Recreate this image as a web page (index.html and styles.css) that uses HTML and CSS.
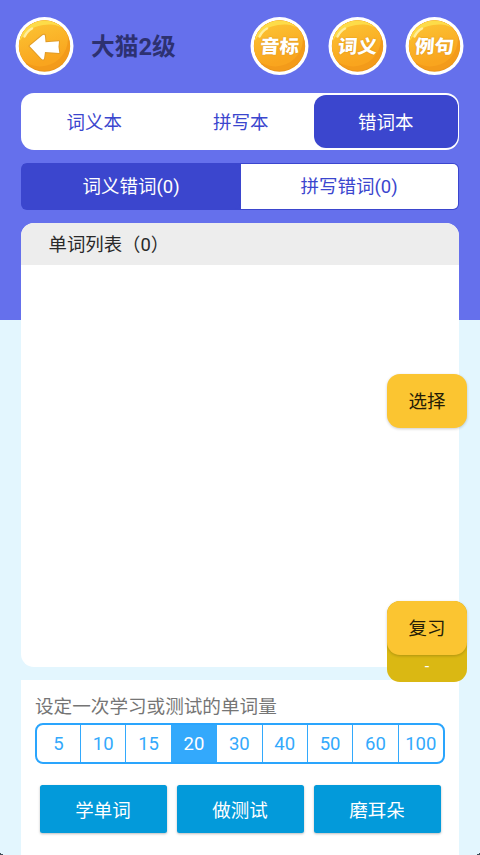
FILE: index.html
```html
<!DOCTYPE html>
<html lang="zh-CN">
<head>
<meta charset="utf-8">
<title>大猫2级</title>
<link rel="stylesheet" href="styles.css">
</head>
<body>
<svg class="defs" width="0" height="0" aria-hidden="true">
  <defs>
    <linearGradient id="gold" x1="0" y1="0" x2=".3" y2="1">
      <stop offset="0" stop-color="#fdcf3c"/>
      <stop offset="1" stop-color="#f9a51e"/>
    </linearGradient>
    <clipPath id="disc"><circle cx="29.5" cy="30" r="25.5"/></clipPath>
    <symbol id="coin" viewBox="0 0 59 60">
      <circle cx="29.5" cy="30" r="29" fill="#fff"/>
      <circle cx="29.5" cy="30" r="25.7" fill="#e8941c"/>
      <g clip-path="url(#disc)">
        <circle cx="29.5" cy="29" r="25.7" fill="#f39b1a"/>
        <circle cx="25" cy="22.500" r="28" fill="url(#gold)"/>
        <path d="M4 26C7 11 17 4 29 4s17 3 22 10C43 8 35 8 28 9 15 11 10 17 4 26Z" fill="#fddc49"/>
        <path d="M9.500 20.500c2-4 4.500-6.500 7.500-8" fill="none" stroke="#ffee9c" stroke-width="2.500" stroke-linecap="round"/>
      </g>
    </symbol>
  </defs>
</svg>
<main class="page">
  <header class="header">
    <button class="round">
      <svg viewBox="0 0 59 60"><use href="#coin"/><path d="M14.500 30 27.500 19.200c1.500-1.100 2.400-.5 2.500 1l.5 6 13.500-1-.5 5.500.8 6.300-14.300-1-.9 6.200c-.2 1.400-1.200 1.700-2.400.7Z" fill="#fff" stroke="#e19c27" stroke-width="2" stroke-linejoin="round" paint-order="stroke"/></svg>
    </button>
    <h1 class="title">大猫2级</h1>
    <nav class="rounds">
      <button class="round"><svg viewBox="0 0 59 60"><use href="#coin"/></svg><span class="round-label">音标</span></button>
      <button class="round"><svg viewBox="0 0 59 60"><use href="#coin"/></svg><span class="round-label">词义</span></button>
      <button class="round"><svg viewBox="0 0 59 60"><use href="#coin"/></svg><span class="round-label">例句</span></button>
    </nav>
  </header>

  <nav class="books">
    <button class="book">词义本</button>
    <button class="book">拼写本</button>
    <button class="book active">错词本</button>
  </nav>

  <nav class="kinds">
    <button class="kind active">词义错词(0)</button>
    <button class="kind">拼写错词(0)</button>
  </nav>

  <section class="list">
    <h2 class="list-title">单词列表（0）</h2>
  </section>

  <section class="panel">
    <p class="panel-title">设定一次学习或测试的单词量</p>
    <div class="amounts">
      <button class="amount">5</button>
      <button class="amount">10</button>
      <button class="amount">15</button>
      <button class="amount active">20</button>
      <button class="amount">30</button>
      <button class="amount">40</button>
      <button class="amount">50</button>
      <button class="amount">60</button>
      <button class="amount">100</button>
    </div>
    <div class="actions">
      <button class="action">学单词</button>
      <button class="action">做测试</button>
      <button class="action">磨耳朵</button>
    </div>
  </section>

  <button class="float select">选择</button>
  <div class="review">
    <button class="float">复习</button>
    <span class="review-count">-</span>
  </div>
</main>
</body>
</html>
```
FILE: styles.css
```css
* { box-sizing: border-box; }

body {
  margin: 0;
  font-family: Roboto, "Noto Sans CJK SC", sans-serif;
  font-size: 18.5px;
}

button {
  margin: 0;
  padding: 0;
  border: 0;
  background: none;
  color: inherit;
  font: inherit;
}

h1, h2, p { margin: 0; }

.defs { position: absolute; }

.page {
  position: relative;
  height: 855px;
  padding: 16px 21px 0;
  overflow: hidden;
  background: linear-gradient(#6570ec 320.5px, #e3f6fe 320.5px);
}

/* Dark screen corners */
.page::before,
.page::after {
  content: "";
  position: absolute;
  bottom: 0;
  width: 4px;
  height: 2px;
}

.page::before {
  left: 0;
  background: linear-gradient(to top right, #42505a 50%, transparent 50%);
}

.page::after {
  right: 0;
  background: linear-gradient(to top left, #42505a 50%, transparent 50%);
}

.header {
  display: flex;
  align-items: center;
  height: 60px;
  margin: 0 -5px 0 -6px;
}

.round {
  position: relative;
  flex: none;
  width: 59px;
  height: 60px;
}

.round svg { display: block; width: 100%; height: 100%; }

.round-label {
  position: absolute;
  inset: 0;
  color: #fff;
  font-size: 19.5px;
  font-weight: 900;
  line-height: 61px;
  text-align: center;
  text-shadow: 0 0 1.5px #cf8513;
  white-space: nowrap;
  transform: skewX(-5deg) scaleY(.94);
}

.title {
  margin-left: 17px;
  color: #2d3171;
  font-size: 23.7px;
  font-weight: 700;
  line-height: 60px;
  padding-top: 2px;
}

.rounds {
  display: flex;
  gap: 18.3px;
  margin-left: auto;
}

.books {
  display: flex;
  height: 56.5px;
  margin-top: 17px;
  padding: 2px 1.5px 1.5px 0;
  border-radius: 13px;
  background: #fff;
  color: #3b46ce;
}

.book { flex: 1; padding-bottom: 1px; }

.book.active {
  flex: none;
  width: 143.5px;
  border-radius: 12px;
  background: #3b46ce;
  color: #fff;
}

.kinds {
  display: flex;
  height: 47.5px;
  margin-top: 13px;
  padding: 1.5px;
  border-radius: 6px;
  background: #3b46ce;
  color: #3b46ce;
}

.kind {
  flex: 1;
  padding-bottom: 2px;
  border-radius: 0 5px 5px 0;
  background: #fff;
}

.kind:last-child { margin-left: 1px; }

.kind.active { background: #3b46ce; color: #fff; }

.list {
  height: 444px;
  margin-top: 13px;
  border-radius: 13px;
  overflow: hidden;
  background: #fff;
}

.list-title {
  height: 42px;
  padding-left: 27.5px;
  background: #ededed;
  color: #292929;
  font-size: 18.4px;
  font-weight: 400;
  line-height: 43px;
}

.panel {
  height: 175px;
  margin-top: 13px;
  padding: 13px 14px 0;
  background: #fff;
}

.panel-title {
  color: #757575;
  font-size: 18.6px;
  line-height: 28px;
}

.amounts {
  display: grid;
  grid-template-columns: 43px repeat(8, 1fr);
  height: 41px;
  margin-top: 2px;
  border: 2px solid #2aa5fd;
  border-radius: 8px;
  overflow: hidden;
  color: #33a9fc;
  letter-spacing: .5px;
}

.amount { border-left: 1.5px solid #33a9fc; }
.amount:first-child { border-left: 0; }
.amount.active { background: #33a9fc; color: #fff; }

.actions {
  display: flex;
  gap: 10px;
  margin: 21px 4.5px 0;
}

.action {
  flex: 1;
  height: 48px;
  border-radius: 2.5px;
  background: #039ada;
  box-shadow: 0 1px 2.5px #0004;
  color: #fff;
}

.float {
  width: 80px;
  height: 54px;
  padding-bottom: 2px;
  border-radius: 13px;
  background: #fbc531;
  box-shadow: 0 1px 3px #0003;
  color: #251d07;
}

.select {
  position: absolute;
  top: 374px;
  left: 387px;
}

.review {
  position: absolute;
  top: 601px;
  left: 387px;
  display: flex;
  flex-direction: column;
  width: 80px;
  height: 80.5px;
  border-radius: 13px;
  background: #dab813;
}

.review-count {
  color: #fff;
  font-size: 16px;
  line-height: 24px;
  text-align: center;
}
```
